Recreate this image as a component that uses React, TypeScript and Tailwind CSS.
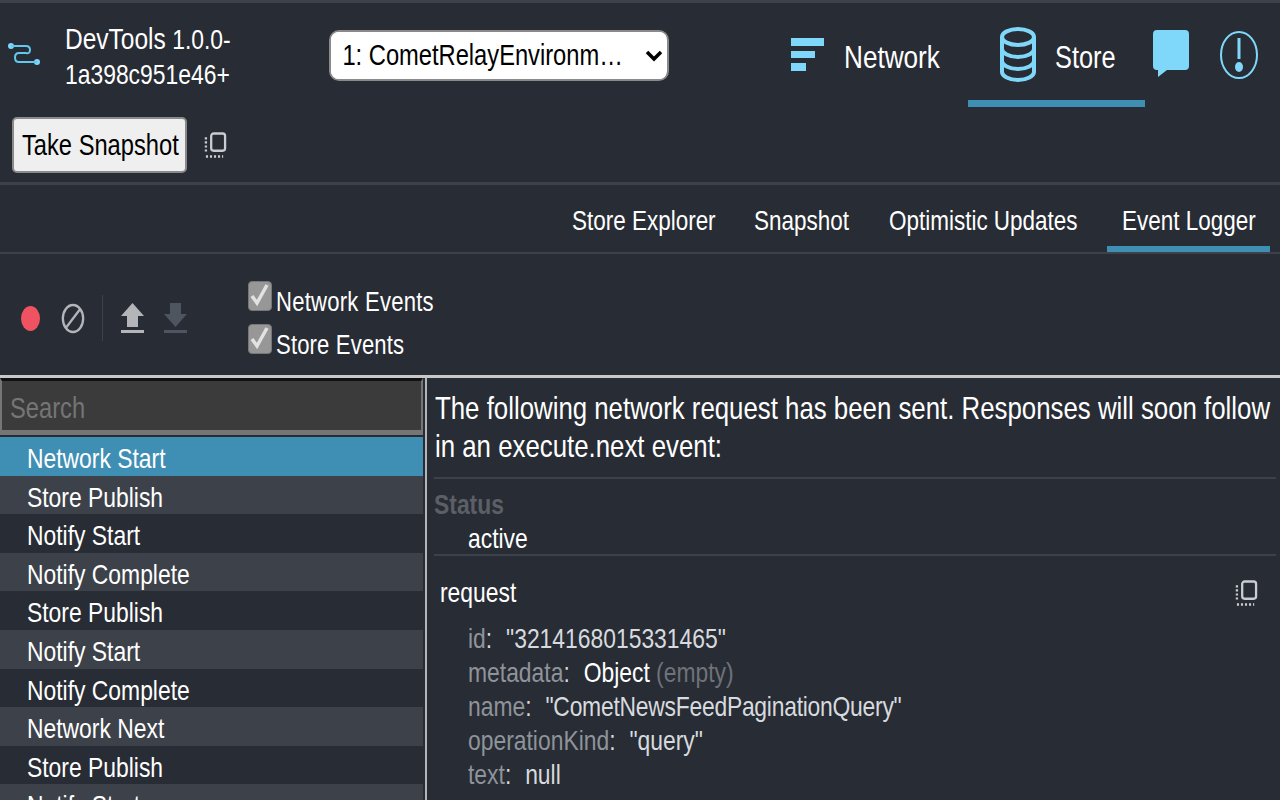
import React from 'react';

// the reference is squashed horizontally, so text is narrowed with a scale
const T = ({ className = '', children }: { className?: string; children: React.ReactNode }) => (
  <span className={`inline-block origin-left scale-x-[0.817] whitespace-nowrap ${className}`}>{children}</span>
);

const CopyIcon = ({ className }: { className?: string }) => (
  <svg viewBox="0 0 24 28" className={className} fill="none" stroke="#c9ccd1">
    <rect x="7.5" y="2" width="14.5" height="18" rx="2.5" strokeWidth="2.4" />
    <path d="M2 6v16M2 26h18" strokeWidth="2.4" strokeDasharray="2.2 2" />
  </svg>
);

const CheckBox = () => (
  <span className="flex h-[30px] w-[24px] items-center justify-center rounded-[4px] border border-[#777] bg-[#979797]">
    <svg viewBox="0 0 24 30" className="h-[30px] w-[24px] shrink-0" fill="none" stroke="#e2e2e2" strokeWidth="3.500">
      <path d="M4 15l5 7 10-18" />
    </svg>
  </span>
);

const events = [
  'Network Start',
  'Store Publish',
  'Notify Start',
  'Notify Complete',
  'Store Publish',
  'Notify Start',
  'Notify Complete',
  'Network Next',
  'Store Publish',
  'Notify Start',
];

const tabs = [
  { label: 'Store Explorer', width: 'w-[172px]' },
  { label: 'Snapshot', width: 'w-[125px]' },
  { label: 'Optimistic Updates', width: 'w-[223px]' },
  { label: 'Event Logger', width: 'w-[163px]' },
];

const Row = ({ name, children }: { name: string; children: React.ReactNode }) => (
  <div className="h-[34px] leading-[34px]">
    <T>
      <span className="text-[#8f939a]">{name}</span>
      <span className="text-[#d7dade]">:</span>
      <span className="ml-[17px] text-[#d7dade]">{children}</span>
    </T>
  </div>
);

export default function App() {
  return (
    <div className="flex h-[800px] w-[1280px] flex-col overflow-hidden bg-[#282c34] font-['Liberation_Sans',Arial,sans-serif] text-[28px] text-white">
      {/* Top bar */}
      <div className="flex h-[107px] shrink-0 border-t-[3px] border-[#3d424a]">
        <svg viewBox="0 0 34 22" className="ml-[7px] mt-[40px] h-[22px] w-[34px]" fill="none" stroke="#61c8ee" strokeWidth="2">
          <circle cx="4" cy="3" r="3" fill="#7fd7f9" stroke="none" />
          <circle cx="30" cy="19" r="3" fill="#7fd7f9" stroke="none" />
          <path d="M4 3h15q4 0 4 4t-4 3h-7q-4 0-4 4.500t4 4.500h18" />
        </svg>
        <div className="ml-[24px] mt-[18px] w-[190px] leading-[35px]">
          <T>
            <span className="text-[30px]">DevTools</span> 1.0.0-
          </T>
          <br />
          <T>1a398c951e46+</T>
        </div>
        <div className="relative ml-[74px] mt-[27px] h-[51px] w-[340px] overflow-hidden rounded-[10px] border-2 border-[#8a8a8a] bg-white">
          <select className="h-full w-[410px] origin-left scale-x-[0.817] appearance-none bg-white pl-[14px] text-[29px] text-black outline-none">
            <option>1: CometRelayEnvironm…</option>
          </select>
          <svg viewBox="0 0 18 12" className="absolute right-[4px] top-[18px] h-[12px] w-[18px]" fill="none" stroke="#000" strokeWidth="3.500">
            <path d="M2 2l7 7 7-7" />
          </svg>
        </div>
        <div className="ml-auto flex">
          <div className="mr-[20px] mt-[35px] flex items-start">
            <div className="flex w-[33px] flex-col gap-[5px]">
              <div className="h-[8px] w-[33px] bg-[#7fd7f9]" />
              <div className="h-[7px] w-[24px] bg-[#7fd7f9]" />
              <div className="h-[8px] w-[15px] bg-[#7fd7f9]" />
            </div>
            <span className="ml-[20px] w-[96px] text-[32px] leading-[38px]">
              <T>Network</T>
            </span>
          </div>
          <div className="mx-[8px] flex h-[104px] w-[177px] items-start border-b-[7px] border-[#3f8fb5] pl-[32px] pt-[24px]">
            <svg viewBox="0 0 36 55" className="h-[55px] w-[36px]" fill="none" stroke="#7fd7f9" strokeWidth="4">
              <ellipse cx="18" cy="10" rx="16" ry="8" />
              <path d="M2 10v35c0 4 7 8 16 8s16-4 16-8V10" />
              <path d="M2 22c0 4 7 8 16 8s16-4 16-8M2 34c0 4 7 8 16 8s16-4 16-8" />
            </svg>
            <span className="ml-[19px] mt-[11px] w-[60px] text-[31px] leading-[40px]">
              <T>Store</T>
            </span>
          </div>
          <svg viewBox="0 0 36 47" className="mt-[27px] h-[47px] w-[36px]" fill="#7fd7f9">
            <path d="M4 0h28a4 4 0 0 1 4 4v32a4 4 0 0 1-4 4H14L5 47v-7H4a4 4 0 0 1-4-4V4a4 4 0 0 1 4-4z" />
          </svg>
          <svg viewBox="0 0 38 48" className="ml-[31px] mr-[22px] mt-[28px] h-[48px] w-[38px]" fill="none" stroke="#7fd7f9" strokeWidth="2">
            <ellipse cx="19" cy="24" rx="18" ry="23" />
            <path d="M19 7v21" strokeWidth="3" />
            <ellipse cx="19" cy="36" rx="4" ry="5" fill="#7fd7f9" stroke="none" />
          </svg>
        </div>
      </div>

      {/* Snapshot bar */}
      <div className="flex h-[78px] shrink-0 items-start border-b-[3px] border-[#3d424a] pl-[12px] pt-[10px]">
        <div className="h-[56px] w-[175px] rounded-[5px] border-2 border-[#8a8a8a] bg-[#efefef] pl-[8px] text-[29px] leading-[52px] text-black">
          <T>Take Snapshot</T>
        </div>
        <CopyIcon className="ml-[17px] mt-[14px] h-[28px] w-[23px]" />
      </div>

      {/* Tabs */}
      <div className="flex h-[69px] shrink-0 items-stretch justify-end gap-[10px] border-b-2 border-[#3d424a] pr-[10px] text-[27.500px]">
        {tabs.map((tab, i) => (
          <div
            key={tab.label}
            className={`flex items-center pl-[15px] ${tab.width} ${i === 3 ? 'border-b-[6px] border-[#3f8fb5] pt-[10px]' : 'pt-[4px]'}`}
          >
            <T>{tab.label}</T>
          </div>
        ))}
      </div>

      {/* Toolbar */}
      <div className="flex h-[121px] shrink-0 items-center">
        <div className="ml-[21px] mt-[7px] h-[25px] w-[19px] rounded-[50%] bg-[#ef5261]" />
        <svg viewBox="0 0 26 32" className="ml-[21px] mt-[7px] h-[31px] w-[24px]" fill="none" stroke="#b3b5b9" strokeWidth="2.500" preserveAspectRatio="none">
          <ellipse cx="13" cy="16" rx="11" ry="14" />
          <path d="M5 26L21 6" />
        </svg>
        <div className="ml-[17px] mt-[7px] h-[46px] w-px bg-[#3d424a]" />
        <svg viewBox="0 0 23 30" className="ml-[18px] mt-[7px] h-[30px] w-[23px]" fill="#b3b5b9">
          <path d="M11.500 0L23 13h-6v11H6V13H0zM0 27h23v3H0z" />
        </svg>
        <svg viewBox="0 0 23 30" className="ml-[20px] mt-[7px] h-[30px] w-[23px]" fill="#4e5460">
          <path d="M6 0h11v11h6L11.500 24 0 11h6zM0 27h23v3H0z" />
        </svg>
        <div className="ml-[61px] mt-[6px] flex flex-col text-[27px]">
          <label className="flex h-[43px] items-center gap-[4px]">
            <CheckBox />
            <T className="mt-[13px] tracking-[0.3px]">Network Events</T>
          </label>
          <label className="flex h-[43px] items-center gap-[4px]">
            <CheckBox />
            <T className="mt-[13px] tracking-[0.2px]">Store Events</T>
          </label>
        </div>
      </div>

      {/* Split panes */}
      <div className="flex min-h-0 flex-1 border-t-[3px] border-[#c8c8c8]">
        <div className="w-[425px] shrink-0 pr-[2px]">
          <div className="h-[57px] border-2 border-b-[5px] border-t-[3px] border-[#767676] border-t-[#111] bg-[#3b3b3b] pl-[8px] text-[29px] leading-[54px] text-[#757575]">
            <T>Search</T>
          </div>
          <div className="mt-[2px]">
            {events.map((name, i) => (
              <div
                key={i}
                className={`h-[38.6px] pl-[27px] leading-[44px] ${
                  i === 0 ? 'bg-[#3f8fb5]' : i % 2 === 1 ? 'bg-[#3d424a]' : ''
                }`}
              >
                <T>{name}</T>
              </div>
            ))}
          </div>
        </div>
        <div className="min-w-0 flex-1 border-l-2 border-[#b3b5b9] pl-[7px] pr-[4px]">
          <div className="h-[101px] border-b-2 border-[#3d424a] pl-px pt-[11px] text-[31.600px] leading-[38px]">
            <T>The following network request has been sent. Responses will soon follow</T>
            <br />
            <T>in an execute.next event:</T>
          </div>
          <div className="h-[77px] border-b-2 border-[#3d424a]">
            <div className="h-[38px] pt-[7px] font-bold leading-[38px] text-[#5c5f65]">
              <T>Status</T>
            </div>
            <div className="pl-[34px] pt-[4px] leading-[36px]">
              <T>active</T>
            </div>
          </div>
          <div className="relative pl-[6px] pt-[19px] leading-[36px]">
            <T>request</T>
            <CopyIcon className="absolute right-[18px] top-[23px] h-[28px] w-[23px]" />
          </div>
          <div className="pl-[34px] pt-[11px]">
            <Row name="id">"3214168015331465"</Row>
            <Row name="metadata">
              <span className="text-white">Object</span> <span className="text-[#6f7278]">(empty)</span>
            </Row>
            <Row name="name">
              <span className="tracking-[-0.3px]">"CometNewsFeedPaginationQuery"</span>
            </Row>
            <Row name="operationKind">"query"</Row>
            <Row name="text">null</Row>
          </div>
        </div>
      </div>
    </div>
  );
}
